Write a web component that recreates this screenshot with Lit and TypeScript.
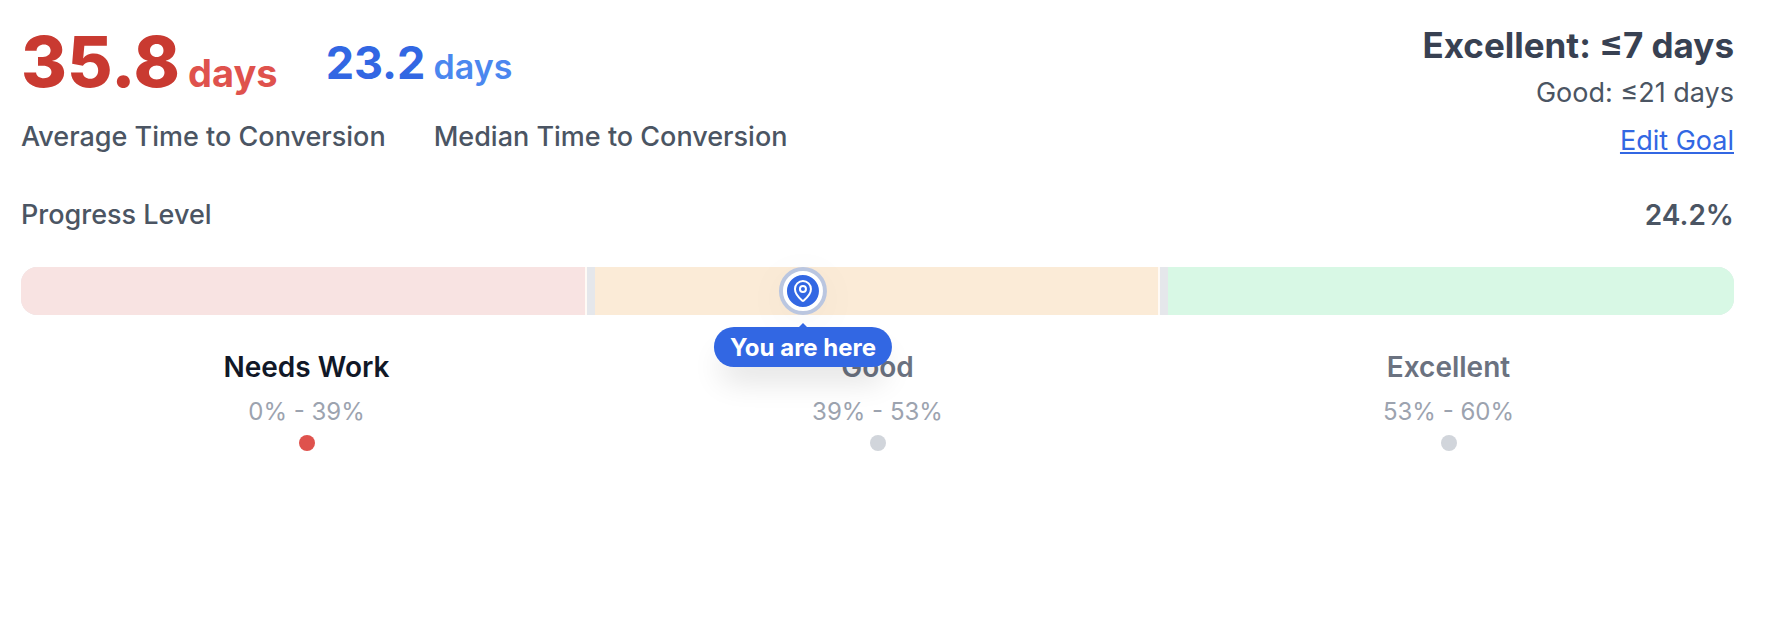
import { LitElement, html, css, svg } from "lit";
import { customElement, property } from "lit/decorators.js";
import { classMap } from "lit/directives/class-map.js";
import { styleMap } from "lit/directives/style-map.js";

interface Level {
  name: string;
  range: string;
  tone: "low" | "mid" | "high";
  current: boolean;
}

const LEVELS: Level[] = [
  { name: "Needs Work", range: "0% - 39%", tone: "low", current: true },
  { name: "Good", range: "39% - 53%", tone: "mid", current: false },
  { name: "Excellent", range: "53% - 60%", tone: "high", current: false },
];

const pinShape = svg`
  <path d="M20 10c0 4.993-5.539 10.193-7.399 11.799a1 1 0 0 1-1.202 0C9.539 20.193 4 14.993 4 10a8 8 0 0 1 16 0"></path>
  <circle cx="12" cy="10" r="3"></circle>
`;

@customElement("progress-track")
export class ProgressTrack extends LitElement {
  @property({ attribute: false }) levels: Level[] = [];
  @property({ type: Number }) position = 0;

  static styles = css`
    :host {
      display: block;
    }
    .track {
      position: relative;
    }
    .segments {
      display: grid;
      grid-template-columns: repeat(3, 1fr);
      gap: 8px;
      height: 48px;
      border-radius: 16px;
      overflow: hidden;
      background: #e5e7eb;
    }
    .segment {
      border-right: 2px solid #fffaf5;
    }
    .segment:last-child {
      border-right: 0;
    }
    .low {
      background: #f8e3e2;
    }
    .mid {
      background: #fbebd7;
    }
    .high {
      background: #d8f8e5;
    }
    .marker {
      position: absolute;
      top: 0;
      display: flex;
      flex-direction: column;
      align-items: center;
      transform: translateX(-50%);
    }
    .pin {
      box-sizing: border-box;
      display: grid;
      place-items: center;
      width: 40px;
      height: 40px;
      margin: 4px;
      border: 4px solid #fff;
      border-radius: 50%;
      background: #3267e3;
      box-shadow:
        0 0 0 4px #bac6e0,
        0 8px 48px rgba(0, 0, 0, 0.06);
    }
    .icon {
      display: block;
      width: 24px;
      height: 24px;
      fill: none;
      stroke: #fff;
      stroke-width: 2;
      stroke-linecap: round;
      stroke-linejoin: round;
    }
    .arrow {
      width: 8px;
      height: 4px;
      margin-top: 8px;
      background: #3267e3;
      clip-path: polygon(50% 0, 100% 100%, 0 100%);
    }
    .tip {
      padding: 5px 16px 3px;
      border-radius: 20px;
      background: #3267e3;
      color: #fff;
      font-size: 24px;
      line-height: 32px;
      font-weight: 700;
      white-space: nowrap;
      box-shadow: 0 20px 30px -6px rgba(0, 0, 0, 0.12);
    }
  `;

  render() {
    return html`
      <div class="track">
        <div class="segments">
          ${this.levels.map(
            (l) => html`<div class=${classMap({ segment: true, [l.tone]: true })}></div>`,
          )}
        </div>
        <div class="marker" style=${styleMap({ left: `${this.position}%` })}>
          <div class="pin">
            <svg class="icon" viewBox="0 0 24 24" aria-hidden="true">${pinShape}</svg>
          </div>
          <div class="arrow"></div>
          <div class="tip">You are here</div>
        </div>
      </div>
    `;
  }
}

@customElement("app-root")
export class AppRoot extends LitElement {
  static styles = css`
    :host {
      display: block;
      padding: 17px 46px 24px 21px;
      font-family: Inter, "Liberation Sans", sans-serif;
      font-size: 27px;
      line-height: 40px;
      color: #4b5563;
    }
    .header,
    .progress {
      display: flex;
      justify-content: space-between;
    }
    .values,
    .captions {
      display: flex;
      align-items: center;
      gap: 48px;
    }
    .values {
      height: 90px;
    }
    .captions {
      margin-top: 10px;
      font-weight: 500;
    }
    .value {
      display: flex;
      align-items: baseline;
      gap: 8px;
      line-height: 1;
    }
    .average {
      color: #c93a31;
      font-size: 70px;
      font-weight: 800;
    }
    .median {
      color: #3267e3;
      font-size: 45px;
      font-weight: 700;
    }
    .average .unit {
      color: #df524d;
      font-size: 38px;
      font-weight: 700;
    }
    .median .unit {
      color: #4b87ef;
      font-size: 34px;
      font-weight: 600;
    }
    .goals {
      display: flex;
      flex-direction: column;
      align-items: flex-end;
    }
    .target {
      color: #384152;
      font-size: 35px;
      line-height: 56px;
      font-weight: 700;
    }
    .edit {
      margin-top: 8px;
      color: #3267e3;
      text-decoration: underline;
    }
    .progress {
      margin: 34px 0 32px;
      font-weight: 500;
    }
    .percent {
      font-size: 28px;
      font-weight: 600;
    }
    .levels {
      display: grid;
      grid-template-columns: repeat(3, 1fr);
      margin: 32px 0 0;
      padding: 0;
      list-style: none;
    }
    .level {
      display: flex;
      flex-direction: column;
      align-items: center;
    }
    .name {
      color: #6b7280;
      font-size: 28px;
      font-weight: 600;
    }
    .range {
      margin: 9px 0 7px;
      color: #9ca3af;
      font-size: 24px;
      line-height: 32px;
    }
    .dot {
      width: 16px;
      height: 16px;
      border-radius: 50%;
      background: #d1d5db;
    }
    .current .name {
      color: #111827;
    }
    .current .dot {
      background: #df524d;
    }
  `;

  render() {
    return html`
      <header class="header">
        <div>
          <div class="values">
            <div class="value average">35.8<span class="unit">days</span></div>
            <div class="value median">23.2<span class="unit">days</span></div>
          </div>
          <div class="captions">
            <span>Average Time to Conversion</span>
            <span>Median Time to Conversion</span>
          </div>
        </div>
        <div class="goals">
          <div class="target">Excellent: ≤7 days</div>
          <div>Good: ≤21 days</div>
          <a class="edit" href="#edit-goal">Edit Goal</a>
        </div>
      </header>
      <div class="progress">
        <span>Progress Level</span>
        <span class="percent">24.2%</span>
      </div>
      <progress-track .levels=${LEVELS} .position=${45.65}></progress-track>
      <ul class="levels">
        ${LEVELS.map(
          (l) => html`
            <li class=${classMap({ level: true, current: l.current })}>
              <span class="name">${l.name}</span>
              <span class="range">${l.range}</span>
              <span class="dot"></span>
            </li>
          `,
        )}
      </ul>
    `;
  }
}
